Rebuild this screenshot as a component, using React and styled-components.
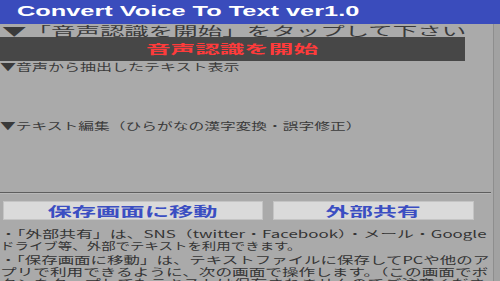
import React, { useLayoutEffect, useRef, useState } from 'react';
import styled, { createGlobalStyle } from 'styled-components';

const GlobalStyle = createGlobalStyle`
  html, body {
    margin: 0;
    padding: 0;
    background: #aaaaaa;
    overflow: hidden;
  }
`;

const jp = `"Noto Sans CJK JP", "Noto Sans", sans-serif`;

const Screen = styled.div`
  width: 500px;
  height: 281px;
  display: flex;
  flex-direction: column;
  background: #aaaaaa;
  overflow: hidden;
`;

const TitleBar = styled.div`
  height: 24px;
  flex: none;
  display: flex;
  align-items: center;
  padding: 0 0 3px 17px;
  box-sizing: border-box;
  background: #3a4cbc;
  color: #ffffff;
  font-family: "Liberation Sans", Arial, sans-serif;
  font-weight: bold;
  font-size: 15px;
  line-height: 15px;
`;

const Body = styled.div`
  flex: 1;
  display: flex;
  min-height: 0;
`;

const Content = styled.div`
  flex: 1;
  display: flex;
  flex-direction: column;
  & > * {
    flex: none;
  }
`;

const Scrollbar = styled.div`
  width: 6px;
  flex: none;
  background: #a2a2a2;
  border-left: 1px solid #8e8e8e;
`;

const Heading = styled.div`
  height: ${p => p.$h}px;
  line-height: ${p => p.$h}px;
  font-family: ${jp};
  font-size: ${p => p.$size}px;
  color: #3a3a3a;
  padding-left: ${p => p.$indent || 0}px;
  overflow: visible;
`;

const StartBar = styled.div`
  width: 465px;
  height: 24px;
  display: flex;
  align-items: center;
  justify-content: center;
  background: #474747;
  color: #ff3b3b;
  font-family: ${jp};
  font-weight: bold;
  font-size: 12px;
  line-height: 12px;
`;

const TextArea = styled.div`
  height: ${p => p.$h}px;
`;

const Divider = styled.div`
  height: 1px;
  background: #5e5e5e;
  border-bottom: 1px solid #b8b8b8;
  margin-right: 2px;
`;

const ButtonRow = styled.div`
  display: flex;
  gap: 10px;
  padding: 7px 0 0 3px;
`;

const Button = styled.div`
  width: ${p => p.$w}px;
  height: 19px;
  box-sizing: border-box;
  display: flex;
  align-items: center;
  justify-content: center;
  background: #dadada;
  border: 1px solid #c4c4c4;
  color: #3b4ec2;
  font-family: ${jp};
  font-weight: bold;
  font-size: 13px;
  line-height: 13px;
`;

const Notes = styled.div`
  padding-top: 8px;
  font-family: ${jp};
  font-size: 10px;
  color: #343434;
`;

const NoteLine = styled.div`
  height: 11.5px;
  line-height: 11.5px;
  margin-top: ${p => p.$gap || 0}px;
`;

const Fit = styled.span`
  display: inline-block;
  white-space: nowrap;
  line-height: inherit;
  vertical-align: top;
  transform-origin: ${p => p.$origin || 'left'} center;
`;

function FitText({ width, origin, children }) {
  const ref = useRef(null);
  const [sx, setSx] = useState(1);
  useLayoutEffect(() => {
    const measure = () => {
      const w = ref.current ? ref.current.offsetWidth : 0;
      if (w) setSx(width / w);
    };
    measure();
    if (document.fonts && document.fonts.ready) document.fonts.ready.then(measure);
  }, [width]);
  return (
    <Fit ref={ref} $origin={origin} style={{ transform: `scaleX(${sx})` }}>
      {children}
    </Fit>
  );
}

const notes = [
  { text: '・「外部共有」は、SNS（twitter・Facebook）・メール・Google', w: 486 },
  { text: 'ドライブ等、外部でテキストを利用できます。', w: 302 },
  { text: '・「保存画面に移動」は、テキストファイルに保存してPCや他のア', w: 489, gap: 3 },
  { text: 'プリで利用できるように、次の画面で操作します。（この画面でボ', w: 489 },
  { text: 'タンをタップしてもテキストは保存されませんのでご注意くださ', w: 486 }
];

export default function App() {
  return (
    <>
      <GlobalStyle />
      <Screen>
        <TitleBar>
          <FitText width={343}>Convert Voice To Text ver1.0</FitText>
        </TitleBar>
        <Body>
          <Content>
            <Heading $h={13} $size={12} $indent={2}>
              <FitText width={465}>▼「音声認識を開始」をタップして下さい</FitText>
            </Heading>
            <StartBar>
              <FitText width={172} origin="center">音声認識を開始</FitText>
            </StartBar>
            <Heading $h={12} $size={10}>
              <FitText width={240}>▼音声から抽出したテキスト表示</FitText>
            </Heading>
            <TextArea $h={47} />
            <Heading $h={12} $size={10}>
              <FitText width={362}>▼テキスト編集（ひらがなの漢字変換・誤字修正）</FitText>
            </Heading>
            <TextArea $h={60} />
            <Divider />
            <ButtonRow>
              <Button $w={260}>
                <FitText width={170} origin="center">保存画面に移動</FitText>
              </Button>
              <Button $w={201}>
                <FitText width={95} origin="center">外部共有</FitText>
              </Button>
            </ButtonRow>
            <Notes>
              {notes.map((n, i) => (
                <NoteLine key={i} $gap={n.gap}>
                  <FitText width={n.w}>{n.text}</FitText>
                </NoteLine>
              ))}
            </Notes>
          </Content>
          <Scrollbar />
        </Body>
      </Screen>
    </>
  );
}
